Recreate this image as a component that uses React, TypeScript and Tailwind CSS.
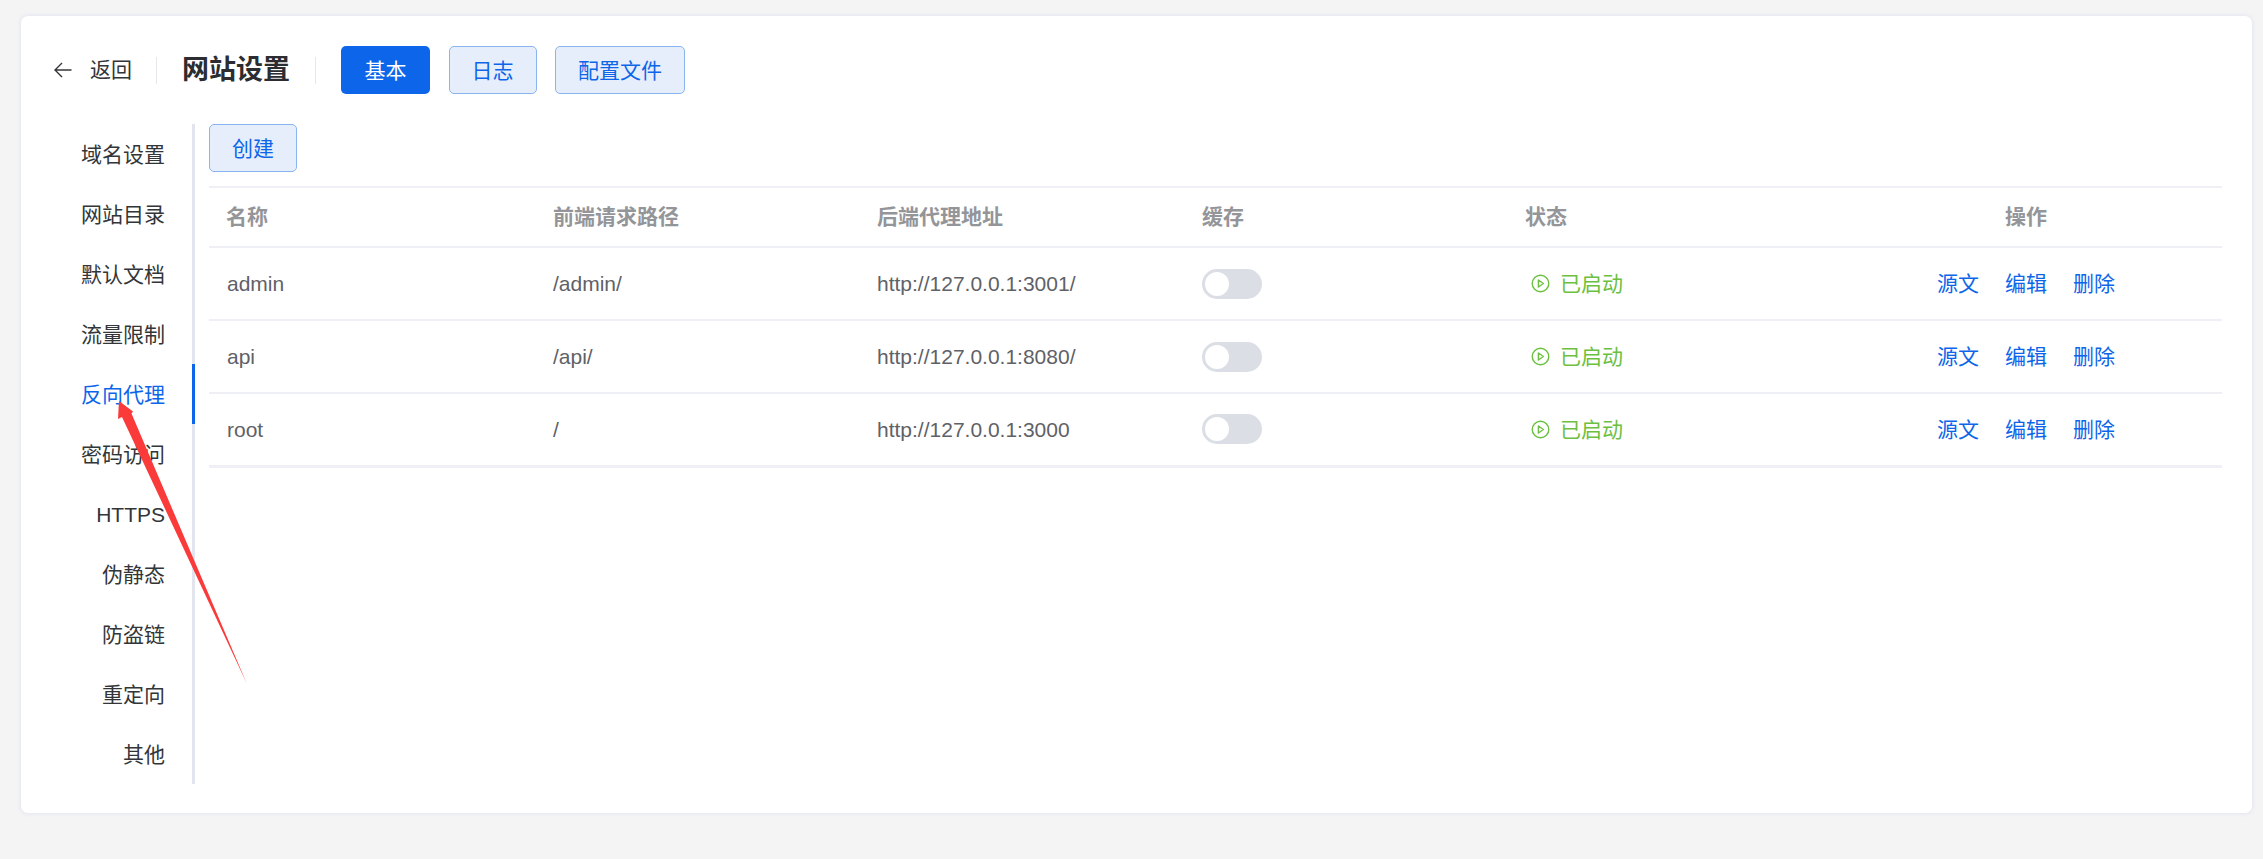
import React from "react";

const navItems = ["域名设置", "网站目录", "默认文档", "流量限制", "反向代理", "密码访问", "HTTPS", "伪静态", "防盗链", "重定向", "其他"];
const rows = [
  ["admin", "/admin/", "http://127.0.0.1:3001/"],
  ["api", "/api/", "http://127.0.0.1:8080/"],
  ["root", "/", "http://127.0.0.1:3000"],
];

function PlayIcon() {
  return (
    <svg width="19" height="19" viewBox="0 0 19 19" fill="none" stroke="#6cc03f" strokeWidth="1.4" className="shrink-0">
      <circle cx="9.5" cy="9.5" r="8.3" />
      <path d="M7.4 6l5 3.5-5 3.5z" strokeLinejoin="round" />
    </svg>
  );
}

function Btn({ children, primary }: { children: React.ReactNode; primary?: boolean }) {
  return primary ? (
    <button className="h-12 w-[89px] rounded-[5px] bg-[#0d66ea] text-white text-[21px] leading-none">{children}</button>
  ) : (
    <button className="h-12 px-[22px] rounded-[5px] bg-[#e6eefb] border border-[#8ab4f0] text-[#0d66ea] text-[21px] leading-none">{children}</button>
  );
}

export default function App() {
  return (
    <div className="relative h-[859px] overflow-hidden bg-[#f4f4f5] pt-4 pl-[21px] font-['Liberation_Sans','Noto_Sans_CJK_SC',sans-serif]">
      <div className="w-[2231px] h-[797px] bg-white rounded-[7px] shadow-[0_0_4px_rgba(210,214,235,0.7)] pt-[30px]">
        <div className="flex items-center h-12 pl-[33px]">
          <svg width="18" height="18" viewBox="0 0 18 18" fill="none" stroke="#333639" strokeWidth="1.4">
            <path d="M17.5 9H1M8 2L1 9l7 7" />
          </svg>
          <span className="ml-[18px] text-[21px] text-[#333639]">返回</span>
          <div className="ml-6 w-px h-[27px] bg-[#e6e7eb]" />
          <h1 className="ml-[25px] text-[27px] font-bold text-[#2b2d30]">网站设置</h1>
          <div className="ml-[25px] w-px h-[27px] bg-[#e6e7eb]" />
          <div className="ml-[25px] flex gap-[18.5px]">
            <Btn primary>基本</Btn>
            <Btn>日志</Btn>
            <Btn>配置文件</Btn>
          </div>
        </div>
        <div className="flex mt-[30px]">
          <nav className="w-[174px] border-r-[3px] border-[#e3e5ee]">
            {navItems.map((n) => (
              <div
                key={n}
                className={
                  n === "反向代理"
                    ? "relative h-[60px] flex items-center justify-end pt-[2px] pr-[27px] text-[21px] text-[#0d66ea] after:absolute after:top-0 after:bottom-0 after:right-[-3px] after:w-[3px] after:bg-[#0d66ea]"
                    : "h-[60px] flex items-center justify-end pt-[2px] pr-[27px] text-[21px] text-[#333639]"
                }
              >
                {n}
              </div>
            ))}
          </nav>
          <div className="ml-[14px] w-[2013px]">
            <Btn>创建</Btn>
            <table className="mt-[14px] w-full table-fixed border-t-2 border-[#eff0f5] text-left">
              <thead>
                <tr className="h-[60px] border-b-2 border-[#eff0f5] text-[21px] font-bold text-[#949599]">
                  <th className="w-[327px] pl-[17px]">名称</th>
                  <th className="w-[323px] pl-[17px]">前端请求路径</th>
                  <th className="w-[325px] pl-[18px]">后端代理地址</th>
                  <th className="w-[325px] pl-[18px]">缓存</th>
                  <th className="w-[321px] pl-[16px]">状态</th>
                  <th className="text-center">操作</th>
                </tr>
              </thead>
              <tbody>
                {rows.map((r, i) => (
                  <tr key={r[0]} className={i === 2 ? "h-[73px] border-b-[3px] border-[#eef0f5] text-[21px] text-[#5f6166]" : "h-[73px] border-b-2 border-[#eff0f5] text-[21px] text-[#5f6166]"}>
                    <td className="pl-[18px]">{r[0]}</td>
                    <td className="pl-[17px]">{r[1]}</td>
                    <td className="pl-[18px]">{r[2]}</td>
                    <td className="pl-[18px]">
                      <div className="w-[60px] h-[30px] rounded-full bg-[#dbdee5] p-[3px]">
                        <div className="w-6 h-6 rounded-full bg-white" />
                      </div>
                    </td>
                    <td className="pl-[22px]">
                      <div className="flex items-center gap-[10px] text-[#6cc03f]">
                        <PlayIcon />
                        已启动
                      </div>
                    </td>
                    <td>
                      <div className="flex justify-center gap-[26px] text-[#0d66ea]">
                        <span>源文</span>
                        <span>编辑</span>
                        <span>删除</span>
                      </div>
                    </td>
                  </tr>
                ))}
              </tbody>
            </table>
          </div>
        </div>
      </div>
      <svg className="absolute left-0 top-0 pointer-events-none" width="300" height="720" viewBox="0 0 300 720">
        <polygon points="119,401 133,411.5 131.5,413.5 247,684 122,417 118,419" fill="#fb3a3a" />
      </svg>
    </div>
  );
}
